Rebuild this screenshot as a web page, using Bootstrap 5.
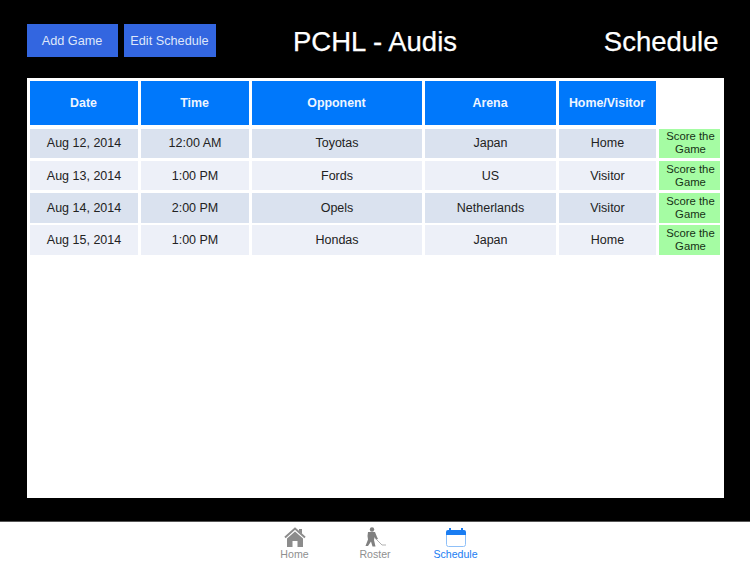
<!DOCTYPE html>
<html lang="en">
<head>
<meta charset="utf-8">
<title>Schedule</title>
<link href="https://cdn.jsdelivr.net/npm/bootstrap@5.3.0/dist/css/bootstrap.min.css" rel="stylesheet">
<style>
html,body{height:563px;overflow:hidden;background:#000;font-family:"Liberation Sans",Arial,sans-serif}
.app-shell{height:563px;display:flex;flex-direction:column}
.main-area{height:522px;padding:24px 26.500px 23.500px 27px;display:flex;flex-direction:column;border-bottom:1px solid #555}
.top-bar{height:33px;margin-bottom:21px;position:relative}
.act-btn{height:33px;background:#3366e0;color:#dfe7fa;border:0;border-radius:0;font-size:12.700px;padding:2px 1px 0 0;display:flex;align-items:center;justify-content:center}
.add-btn{width:91px;margin-right:6px}
.edit-btn{width:92px}
.page-title{flex:0 0 auto;color:#fff;font-size:27.500px;line-height:35px;margin:0;font-weight:400;-webkit-text-stroke:.25px #fff}
.center-title{position:absolute;left:240px;width:216px;text-align:center;top:0}
.right-title{margin-left:auto;padding-right:5px}
.sheet{flex:1;background:#fff;padding:3px 2px 0 3px}
.sched-grid{display:grid;grid-template-columns:108px 108px 170px 131px 97px 61px;column-gap:3px;row-gap:2.500px;grid-template-rows:45px repeat(4,29.700px)}
.sched-grid>div{display:flex;align-items:center;justify-content:center;text-align:center;font-size:12.500px;color:#222;padding-top:1px}
.sched-grid>.hd{background:#0078fb;color:#eef5ff;font-weight:700;font-size:12.400px;height:44px;padding-right:1px;padding-top:0}
.sched-grid>.odd{background:#dae2ef}
.sched-grid>.even{background:#edf0f8}
.sched-grid>.score{background:#a5fca3;color:#163016;font-size:11.300px;line-height:13px;padding:0 0 0 2px}
.tab-bar{height:41px;background:#fff;display:flex;justify-content:center}
.tab-item{width:80.500px;display:flex;flex-direction:column;align-items:center;color:#8f8f8f;font-size:10.600px;line-height:12px;padding-top:5px}
.tab-item svg{height:20px;width:24px;margin-bottom:1px}
.tab-active{color:#1a7df2}
</style>
</head>
<body>
<div class="app-shell">
  <div class="main-area">
    <div class="top-bar d-flex">
      <button class="act-btn add-btn">Add Game</button>
      <button class="act-btn edit-btn">Edit Schedule</button>
      <h1 class="page-title center-title">PCHL - Audis</h1>
      <h1 class="page-title right-title">Schedule</h1>
    </div>
    <div class="sheet">
      <div class="sched-grid">
        <div class="hd">Date</div><div class="hd">Time</div><div class="hd">Opponent</div><div class="hd">Arena</div><div class="hd">Home/Visitor</div><div></div>
        <div class="odd">Aug 12, 2014</div><div class="odd">12:00 AM</div><div class="odd">Toyotas</div><div class="odd">Japan</div><div class="odd">Home</div><div class="score">Score the Game</div>
        <div class="even">Aug 13, 2014</div><div class="even">1:00 PM</div><div class="even">Fords</div><div class="even">US</div><div class="even">Visitor</div><div class="score">Score the Game</div>
        <div class="odd">Aug 14, 2014</div><div class="odd">2:00 PM</div><div class="odd">Opels</div><div class="odd">Netherlands</div><div class="odd">Visitor</div><div class="score">Score the Game</div>
        <div class="even">Aug 15, 2014</div><div class="even">1:00 PM</div><div class="even">Hondas</div><div class="even">Japan</div><div class="even">Home</div><div class="score">Score the Game</div>
      </div>
    </div>
  </div>
  <nav class="tab-bar">
    <div class="tab-item"><svg viewBox="0 0 24 20"><path fill="none" stroke="#8c8c8c" stroke-width="2" d="M2 10.500 12 1.500l10 9"/><path fill="#8c8c8c" d="M12 4.500 4 11.500V20h5.500v-6h5v6H20v-8.500z"/><path fill="#8c8c8c" d="M16 2h3v5l-3-2.500z"/></svg>Home</div>
    <div class="tab-item"><svg viewBox="0 0 24 20"><circle cx="9" cy="2.500" r="2.200" fill="#808080"/><path fill="#808080" d="M5 5h7l2 5 1 2-2 .5-1.500-2-.5 2.500 1.500 6.500H9.500L8 14.500 5 19H2.500L5 12.500 4.500 9z"/><path fill="none" stroke="#a8a8a8" stroke-width=".9" d="M11 10l8 8h4"/></svg>Roster</div>
    <div class="tab-item tab-active"><svg viewBox="0 0 24 20"><path fill="#1a7df2" d="M5 1h2v2h10V1h2v2h1a2 2 0 0 1 2 2v3H2V5a2 2 0 0 1 2-2h1z"/><path fill="none" stroke="#8fc0f8" d="M2.500 8v9.500a2 2 0 0 0 2 2h15a2 2 0 0 0 2-2V8"/></svg>Schedule</div>
  </nav>
</div>
<script src="https://cdn.jsdelivr.net/npm/bootstrap@5.3.0/dist/js/bootstrap.bundle.min.js"></script>
</body>
</html>
